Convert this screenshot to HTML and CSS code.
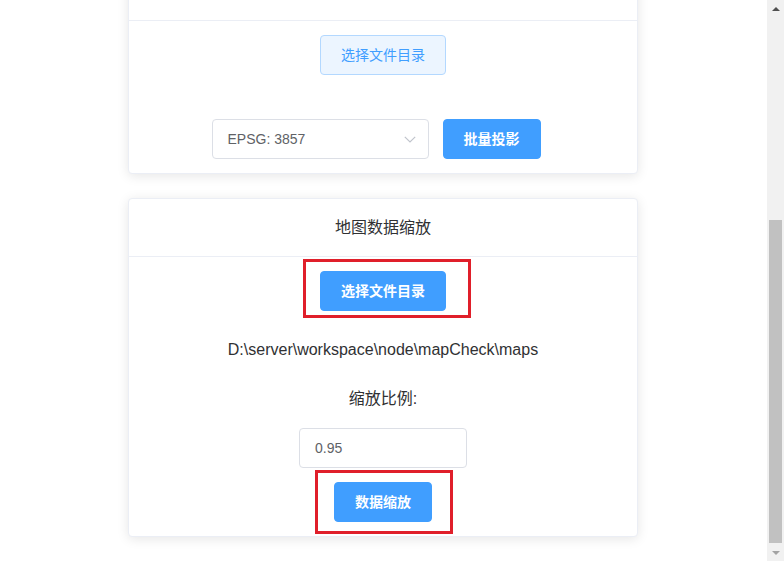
FILE: index.html
```html
<!DOCTYPE html>
<html lang="zh-CN">
<head>
<meta charset="utf-8">
<title>地图数据工具</title>
<link rel="stylesheet" href="styles.css">
</head>
<body>
<div class="app">
  <main class="main">
    <div class="content">
      <section class="card">
        <div class="card-header">&nbsp;</div>
        <div class="card-body">
          <button class="btn btn-plain">选择文件目录</button>
          <div class="proj-row">
            <div class="select">
              <span class="select-text">EPSG: 3857</span>
              <svg class="chevron" width="12" height="7" viewBox="0 0 12 7"><path d="M0.8 0.8 L6 6 L11.2 0.8" fill="none" stroke="#C0C4CC" stroke-width="1.2"/></svg>
            </div>
            <button class="btn btn-primary">批量投影</button>
          </div>
        </div>
      </section>
      <section class="card card-gap">
        <div class="card-header">地图数据缩放</div>
        <div class="card-body">
          <span class="mark mark-one"><button class="btn btn-primary">选择文件目录</button></span>
          <p class="path">D:\server\workspace\node\mapCheck\maps</p>
          <p class="label">缩放比例:</p>
          <div class="input"><span>0.95</span></div>
          <span class="mark mark-two"><button class="btn btn-primary">数据缩放</button></span>
        </div>
      </section>
    </div>
  </main>
  <div class="scrollbar">
    <div class="sb-btn"><span class="tri-up"></span></div>
    <div class="sb-track"><div class="sb-thumb"></div></div>
    <div class="sb-btn"><span class="tri-down"></span></div>
  </div>
</div>
</body>
</html>
```
FILE: styles.css
```css
html, body {
  margin: 0;
  padding: 0;
  background: #fff;
  height: 561px;
  overflow: hidden;
}
body {
  font-family: "Liberation Sans", "Noto Sans CJK SC", sans-serif;
  color: #303133;
}
.app {
  display: flex;
  height: 561px;
}
.main {
  flex: 1;
  overflow: hidden;
}
.content {
  width: 510px;
  margin: -38px 0 0 128px;
}
.card {
  background: #fff;
  border: 1px solid #EBEEF5;
  border-radius: 4px;
  box-shadow: 0 2px 12px 0 rgba(0, 0, 0, 0.1);
  box-sizing: border-box;
}
.card-gap {
  margin-top: 24px;
}
.card-header {
  padding: 18px 20px;
  line-height: 21px;
  height: 21px;
  font-size: 16px;
  text-align: center;
  border-bottom: 1px solid #EBEEF5;
  color: #303133;
}
.card-body {
  padding: 14px 20px 14px;
  display: flex;
  flex-direction: column;
  align-items: center;
}
.btn {
  font-family: "Liberation Sans", "Noto Sans CJK SC", sans-serif;
  font-size: 14px;
  line-height: 14px;
  height: 40px;
  padding: 0 20px;
  border-radius: 4px;
  box-sizing: border-box;
  display: inline-flex;
  align-items: center;
  justify-content: center;
  cursor: pointer;
  white-space: nowrap;
}
.btn-plain {
  background: #ecf5ff;
  border: 1px solid #b3d8ff;
  color: #409EFF;
  font-weight: 400;
}
.btn-primary {
  background: #409EFF;
  border: 1px solid #409EFF;
  color: #fff;
  font-weight: 700;
}
.proj-row {
  margin-top: 44px;
  display: flex;
  align-items: center;
  gap: 14px;
  padding-right: 14px;
}
.select {
  width: 217px;
  height: 40px;
  box-sizing: border-box;
  border: 1px solid #DCDFE6;
  border-radius: 4px;
  display: flex;
  align-items: center;
  padding: 0 12px 0 15px;
  justify-content: space-between;
}
.select-text {
  font-size: 14px;
  color: #606266;
}
.chevron {
  display: block;
}
.mark {
  position: relative;
  display: inline-block;
}
.mark .btn {
  display: flex;
}
.mark::after {
  content: "";
  position: absolute;
  border: 3px solid #e01f2a;
  pointer-events: none;
}
.mark-one::after {
  left: -17px;
  right: -25px;
  top: -12px;
  bottom: -7px;
}
.mark-two::after {
  left: -19px;
  right: -21px;
  top: -12px;
  bottom: -12px;
}
.path {
  margin: 28px 0 0;
  font-size: 16px;
  line-height: 22px;
  color: #303133;
}
.label {
  margin: 27px 0 0;
  font-size: 16px;
  line-height: 22px;
  color: #303133;
}
.input {
  margin-top: 18px;
  width: 168px;
  height: 40px;
  box-sizing: border-box;
  border: 1px solid #DCDFE6;
  border-radius: 4px;
  display: flex;
  align-items: center;
  padding: 0 15px;
  font-size: 14px;
  color: #606266;
}
.mark-two {
  margin-top: 14px;
}
.scrollbar {
  width: 17px;
  background: #f1f1f1;
  display: flex;
  flex-direction: column;
}
.sb-btn {
  height: 17px;
  display: flex;
  align-items: center;
  justify-content: center;
}
.tri-up {
  width: 0;
  height: 0;
  border-left: 4px solid transparent;
  border-right: 4px solid transparent;
  border-bottom: 4px solid #505050;
}
.tri-down {
  width: 0;
  height: 0;
  border-left: 4px solid transparent;
  border-right: 4px solid transparent;
  border-top: 4px solid #a3a3a3;
}
.sb-track {
  flex: 1;
  display: flex;
  flex-direction: column;
  justify-content: flex-end;
  padding-bottom: 1px;
}
.sb-thumb {
  margin: 0 2px;
  height: 323px;
  background: #c1c1c1;
}
```
